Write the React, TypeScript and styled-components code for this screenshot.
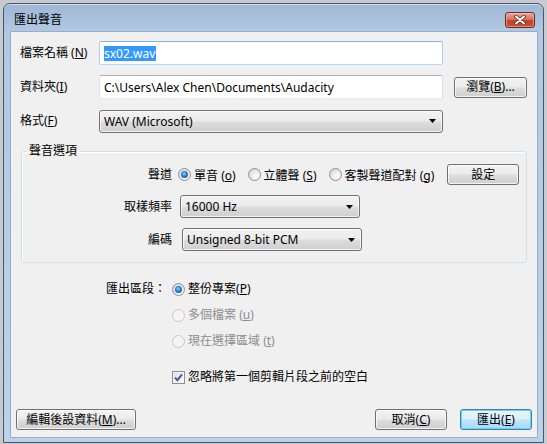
import * as React from "react";
import styled, { createGlobalStyle, css } from "styled-components";

const GlobalStyle = createGlobalStyle`
    html, body {
        margin: 0;
        padding: 0;
    }
    body {
        width: 547px;
        height: 444px;
        overflow: hidden;
        background: #c7cbd1;
        font-family: "Noto Sans", "Noto Sans CJK TC", sans-serif;
        font-size: 12px;
        color: #000;
    }
`;

const Desk = styled.div`
    width: 547px;
    height: 444px;
    box-sizing: border-box;
    padding: 3px 0 0 3px;
`;

const Window = styled.div`
    width: 541px;
    height: 440px;
    box-sizing: border-box;
    border: 1px solid #4b5663;
    border-radius: 7px 7px 0 0;
    padding: 0 5px 0 6px;
    background: linear-gradient(180deg, #9fb7d4 0px, #b0c8e3 27px, #bad2ec 100%);
    box-shadow: inset 0 1px 0 rgba(255, 255, 255, 0.55);
    display: flex;
    flex-direction: column;
`;

const TitleBar = styled.div`
    height: 27px;
    box-sizing: border-box;
    padding: 8px 3px 0 4px;
    display: flex;
    align-items: flex-start;
`;

const Title = styled.div`
    flex: 1;
    line-height: 16px;
`;

const CloseButton = styled.div`
    width: 30px;
    height: 16px;
    box-sizing: border-box;
    border: 1px solid #6b2c26;
    border-radius: 3px;
    background: linear-gradient(180deg, #e9a99e 0%, #d9735f 45%, #c4412b 55%, #c9503a 100%);
    box-shadow: inset 0 0 0 1px rgba(255, 220, 210, 0.45);
    display: flex;
    align-items: center;
    justify-content: center;
`;

const Client = styled.div`
    height: 407px;
    box-sizing: border-box;
    border: 1px solid #98aec6;
    background: #f0f0f0;
    display: flex;
    flex-direction: column;
`;

const FileGrid = styled.div`
    display: grid;
    grid-template-columns: 79px 344px 73px;
    grid-auto-rows: 24px;
    row-gap: 10px;
    padding: 9px 0 0 9px;
    align-items: center;
`;

const Label = styled.span<{ $disabled?: boolean }>`
    white-space: nowrap;
    line-height: 16px;
    color: ${p => (p.$disabled ? "#8d8d8d" : "#000")};
`;

const TextBox = styled.div<{ $focused?: boolean }>`
    height: 24px;
    box-sizing: border-box;
    border: 1px solid;
    border-color: #abadb3 #dbdfe6 #e3e9ef #e2e3ea;
    border-radius: 2px;
    background: #fff;
    padding: 0 4px;
    display: flex;
    align-items: center;
    white-space: nowrap;
    overflow: hidden;
    ${p =>
        p.$focused &&
        css`
            border-color: #7eb4ea #a9cdef #b7d9f6 #a9cdef;
        `}
`;

const Selected = styled.span`
    background: #3399ff;
    color: #fff;
    line-height: 15px;
    padding: 0 1px 0 0;
`;

const buttonFace = css`
    box-sizing: border-box;
    border: 1px solid #707070;
    border-radius: 3px;
    background: linear-gradient(180deg, #f2f2f2 0%, #ebebeb 48%, #dddddd 52%, #cfcfcf 100%);
    box-shadow: inset 0 0 0 1px rgba(255, 255, 255, 0.75);
`;

const Combo = styled.div<{ $w: number; $indent?: number }>`
    ${buttonFace}
    width: ${p => p.$w}px;
    height: 23px;
    margin-left: ${p => p.$indent || 0}px;
    padding: 0 6px 0 4px;
    display: flex;
    align-items: center;
    justify-content: space-between;
    white-space: nowrap;
`;

const Button = styled.button<{ $w: number; $primary?: boolean }>`
    ${buttonFace}
    width: ${p => p.$w}px;
    height: 21px;
    padding: 0;
    font: inherit;
    color: #000;
    line-height: 16px;
    white-space: nowrap;
    ${p =>
        p.$primary &&
        css`
            border-color: #3c7fb1;
            background: linear-gradient(180deg, #eaf6fd 0%, #d9f0fc 48%, #bee6fd 52%, #a7d9f5 100%);
            box-shadow: inset 0 0 0 1px #6fd0f7;
        `}
`;

const BrowseButton = styled(Button)`
    margin-left: 11px;
`;

const GroupBox = styled.fieldset`
    margin: 10px 10px 0 10px;
    padding: 5px 0 11px 0;
    border: 1px solid #d5dfe5;
    border-radius: 3px;
    box-shadow: inset 1px 1px 0 #fff;
    min-width: 0;
`;

const Legend = styled.legend`
    margin-left: 4px;
    padding: 0 3px;
    line-height: 16px;
`;

const OptionGrid = styled.div`
    display: grid;
    grid-template-columns: 150px 1fr;
    column-gap: 6px;
    row-gap: 10px;
    align-items: center;
`;

const RightLabel = styled(Label)`
    text-align: right;
`;

const ChoiceRow = styled.div`
    display: flex;
    align-items: center;
    gap: 12px;
`;

const Choice = styled.label`
    display: flex;
    align-items: center;
    gap: 3px;
    white-space: nowrap;
`;

const Radio = styled.span<{ $checked?: boolean; $disabled?: boolean }>`
    width: 13px;
    height: 13px;
    flex: none;
    box-sizing: border-box;
    border-radius: 50%;
    border: 1px solid ${p => (p.$disabled ? "#c9c9c9" : "#8f8f8f")};
    background: ${p =>
        p.$disabled
            ? "#f4f4f4"
            : "radial-gradient(circle at 65% 70%, #ffffff 0%, #e9e9e9 45%, #cfcfcf 100%)"};
    display: flex;
    align-items: center;
    justify-content: center;
    &::after {
        content: "";
        display: ${p => (p.$checked ? "block" : "none")};
        width: 7px;
        height: 7px;
        border-radius: 50%;
        background: radial-gradient(circle at 45% 40%, #8fd6ff 0%, #2a8ad8 40%, #0d4f94 85%, #09386b 100%);
    }
`;

const SetupButton = styled(Button)`
    margin-left: 1px;
`;

const ExportGrid = styled.div`
    display: grid;
    grid-template-columns: 161px 1fr;
    grid-auto-rows: 16px;
    row-gap: 10px;
    margin-top: 18px;
    align-items: center;
`;

const ExportLabel = styled(Label)`
    text-align: right;
    padding-right: 6px;
`;

const CheckRow = styled.label`
    display: flex;
    align-items: center;
    gap: 3px;
    margin: 20px 0 0 161px;
    white-space: nowrap;
    line-height: 16px;
`;

const CheckBox = styled.span`
    width: 13px;
    height: 13px;
    flex: none;
    box-sizing: border-box;
    border: 1px solid #8e8f8f;
    background: linear-gradient(135deg, #dcdcdc 0%, #ffffff 100%);
    box-shadow: inset 0 0 0 1px #f4f4f4;
    display: flex;
    align-items: center;
    justify-content: center;
`;

const Footer = styled.div`
    margin-top: auto;
    padding: 0 5px 7px 5px;
    display: flex;
    align-items: center;
    gap: 13px;
`;

const Spacer = styled.div`
    flex: 1;
`;

const Arrow = () => (
    <svg width="7" height="4" viewBox="0 0 7 4">
        <polygon points="0,0 7,0 3.5,4" fill="#000" />
    </svg>
);

const channels = [
    { text: "單音 ", key: "o", checked: true },
    { text: "立體聲 ", key: "S" },
    { text: "客製聲道配對 ", key: "g" },
];

const ranges = [
    { text: "整份專案", key: "P", checked: true },
    { text: "多個檔案 ", key: "u", disabled: true },
    { text: "現在選擇區域 ", key: "t", disabled: true },
];

export default function App() {
    return (
        <Desk>
            <GlobalStyle />
            <Window>
                <TitleBar>
                    <Title>匯出聲音</Title>
                    <CloseButton>
                        <svg width="12" height="10" viewBox="0 0 12 10">
                            <path d="M2 1.5 L10 8.5 M10 1.5 L2 8.5" stroke="#5a2a24" strokeWidth="3.6" strokeLinecap="round" />
                            <path d="M2 1.5 L10 8.5 M10 1.5 L2 8.5" stroke="#fff" strokeWidth="2" strokeLinecap="round" />
                        </svg>
                    </CloseButton>
                </TitleBar>
                <Client>
                    <FileGrid>
                        <Label>檔案名稱 (<u>N</u>)</Label>
                        <TextBox $focused>
                            <Selected>sx02.wav</Selected>
                        </TextBox>
                        <span />
                        <Label>資料夾(<u>I</u>)</Label>
                        <TextBox>C:\Users\Alex Chen\Documents\Audacity</TextBox>
                        <BrowseButton $w={73}>瀏覽(<u>B</u>)...</BrowseButton>
                        <Label>格式(<u>F</u>)</Label>
                        <Combo $w={344}>
                            <span>WAV (Microsoft)</span>
                            <Arrow />
                        </Combo>
                        <span />
                    </FileGrid>

                    <GroupBox>
                        <Legend>聲音選項</Legend>
                        <OptionGrid>
                            <RightLabel>聲道</RightLabel>
                            <ChoiceRow>
                                {channels.map(c => (
                                    <Choice key={c.key}>
                                        <Radio $checked={c.checked} />
                                        <span>
                                            {c.text}(<u>{c.key}</u>)
                                        </span>
                                    </Choice>
                                ))}
                                <SetupButton $w={72}>設定</SetupButton>
                            </ChoiceRow>
                            <RightLabel>取樣頻率</RightLabel>
                            <Combo $w={180} $indent={2}>
                                <span>16000 Hz</span>
                                <Arrow />
                            </Combo>
                            <RightLabel>編碼</RightLabel>
                            <Combo $w={180} $indent={4}>
                                <span>Unsigned 8-bit PCM</span>
                                <Arrow />
                            </Combo>
                        </OptionGrid>
                    </GroupBox>

                    <ExportGrid>
                        <ExportLabel>匯出區段：</ExportLabel>
                        {ranges.map((r, i) => (
                            <React.Fragment key={r.key}>
                                {i > 0 && <span />}
                                <Choice>
                                    <Radio $checked={r.checked} $disabled={r.disabled} />
                                    <Label $disabled={r.disabled}>
                                        {r.text}(<u>{r.key}</u>)
                                    </Label>
                                </Choice>
                            </React.Fragment>
                        ))}
                    </ExportGrid>

                    <CheckRow>
                        <CheckBox>
                            <svg width="9" height="9" viewBox="0 0 9 9">
                                <path d="M1 4.6 L3.4 7.2 L8 1.4" fill="none" stroke="#41598f" strokeWidth="1.9" />
                            </svg>
                        </CheckBox>
                        <span>忽略將第一個剪輯片段之前的空白</span>
                    </CheckRow>

                    <Footer>
                        <Button $w={120}>編輯後設資料(<u>M</u>)...</Button>
                        <Spacer />
                        <Button $w={72}>取消(<u>C</u>)</Button>
                        <Button $w={72} $primary>
                            匯出(<u>E</u>)
                        </Button>
                    </Footer>
                </Client>
            </Window>
        </Desk>
    );
}
